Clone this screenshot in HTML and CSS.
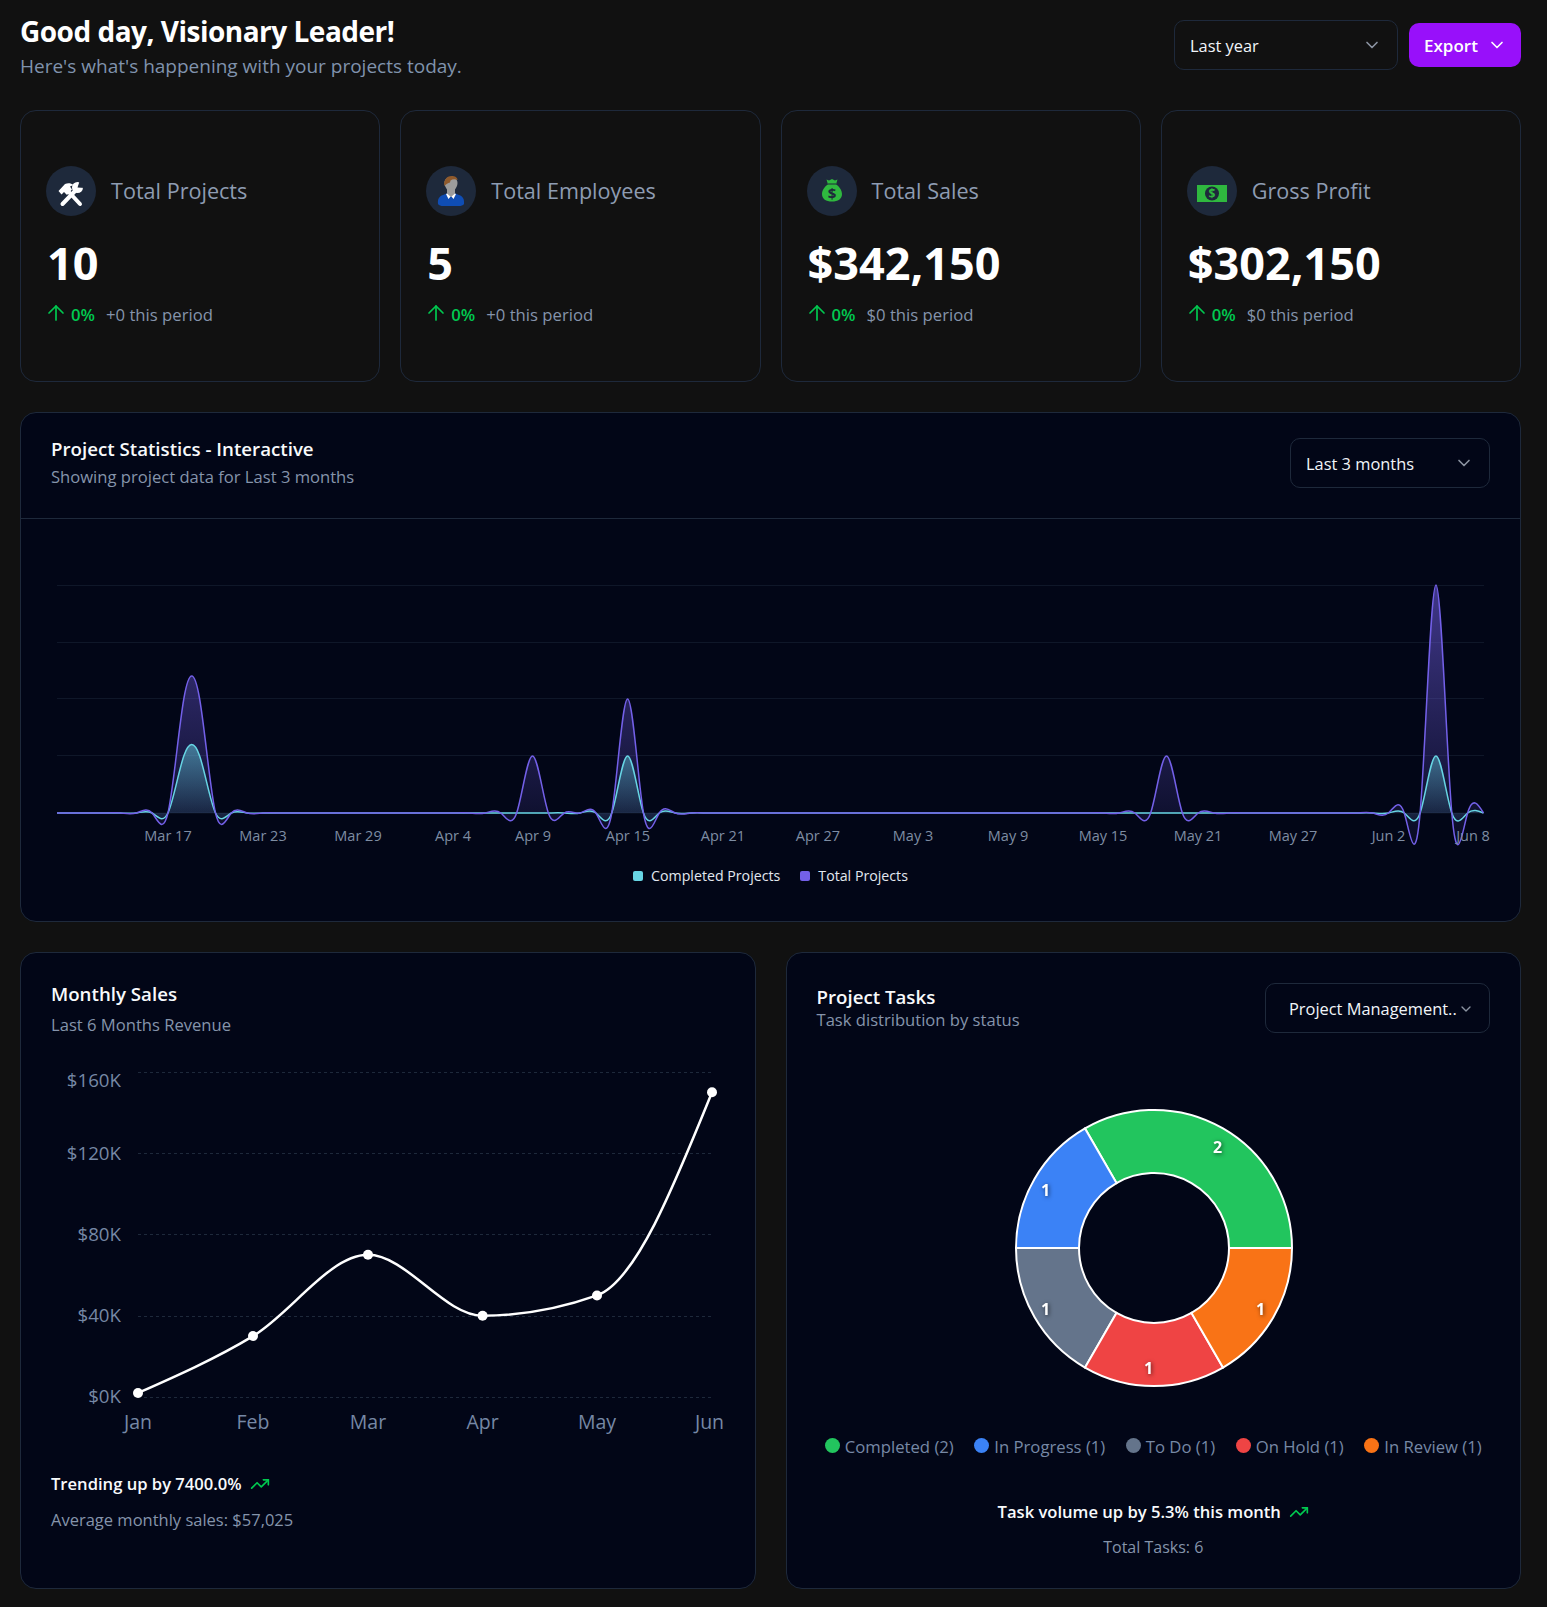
FILE: index.html
```html
<!DOCTYPE html>
<html lang="en">
<head>
    <meta charset="UTF-8">
    <meta name="viewport" content="width=device-width, initial-scale=1.0">
    <title>Dashboard</title>
    <link rel="stylesheet" href="styles.css">
</head>
<body>
    <header class="page-header">
        <div>
            <h1>Good day, Visionary Leader!</h1>
            <p class="page-sub">Here's what's happening with your projects today.</p>
        </div>
        <div class="header-actions">
            <div class="select select-year">
                <span>Last year</span>
                <svg class="chevron" viewBox="0 0 24 24"><path d="m6 9 6 6 6-6"/></svg>
            </div>
            <button class="export-btn">
                Export
                <svg class="chevron" viewBox="0 0 24 24"><path d="m6 9 6 6 6-6"/></svg>
            </button>
        </div>
    </header>

    <!-- stat cards -->
    <section class="stats">
        <div class="stat-card">
            <div class="stat-head">
                <span class="stat-icon">
                    <svg class="tools-icon" viewBox="0 0 28 26" width="28" height="26">
                        <path class="tool-shaft" d="M10 9 23 23"/>
                        <path fill="#fff" d="M1.500 10 8 3c3-1.500 6-1 8.500 1L13 5.500l2 3-5 5.500-3-3-2.500 2.500z"/>
                        <path class="tool-shaft" d="M19 9 5.500 23"/>
                        <circle fill="#fff" cx="20.500" cy="6.500" r="5.500"/>
                        <path fill="#1e293b" d="M20.500 6.500 23 -1 29 1 28 7z"/>
                    </svg>
                </span>
                <span class="stat-label">Total Projects</span>
            </div>
            <div class="stat-value">10</div>
            <div class="stat-trend">
                <svg class="arrow-up" viewBox="0 0 24 24"><path d="m5 12 7-7 7 7"/><path d="M12 19V5"/></svg>
                <span class="trend-pct">0%</span>
                <span class="trend-note">+0 this period</span>
            </div>
        </div>

        <div class="stat-card">
            <div class="stat-head">
                <span class="stat-icon">
                    <svg viewBox="0 0 50 50" width="50" height="50">
                        <path fill="#0f4db4" d="M12 38c-.5-5 1-7.500 5-9l5-2h6l5 2c4 1.500 5.500 4 5 9-1 1.500-3 2-5 2H17c-2 0-4-.5-5-2z"/>
                        <path fill="#fff" d="M20 28l3-1.500 2 3 2-3 3 1.500-2.500 5-2.500-3-2.500 3z"/>
                        <path fill="#9c9c9c" d="M18.500 17c0-4 3-6 6.500-6s6.500 2 6.500 6c0 3-1.500 5-2.500 6.500v4l-4 3.500-4-3.500v-4c-1-1.500-2.500-3.500-2.500-6.500z"/>
                        <path fill="#8f5a2c" d="M18.500 20c-1.500-5 2-10 7-10 3.500 0 6 1.500 6 4-2.500-1-5-1-7 .5l-.5 2c-2 .5-4 1.500-5.500 3.500z"/>
                    </svg>
                </span>
                <span class="stat-label">Total Employees</span>
            </div>
            <div class="stat-value">5</div>
            <div class="stat-trend">
                <svg class="arrow-up" viewBox="0 0 24 24"><path d="m5 12 7-7 7 7"/><path d="M12 19V5"/></svg>
                <span class="trend-pct">0%</span>
                <span class="trend-note">+0 this period</span>
            </div>
        </div>

        <div class="stat-card">
            <div class="stat-head">
                <span class="stat-icon">
                    <svg viewBox="0 0 50 50" width="50" height="50">
                        <path fill="#2fb83f" d="M19.500 13.500 22 14.500 25 13l3 1.500 2.500-1-1.500 5c3.500 2 6 6 6 9.500 0 5-4 7.500-10 7.500s-10-2.500-10-7.500c0-3.500 2.500-7.500 6-9.500z"/>
                        <path stroke="#1e293b" stroke-width="1" d="M21 18h8"/>
                        <text class="bag-dollar" x="25" y="32.500">$</text>
                    </svg>
                </span>
                <span class="stat-label">Total Sales</span>
            </div>
            <div class="stat-value">$342,150</div>
            <div class="stat-trend">
                <svg class="arrow-up" viewBox="0 0 24 24"><path d="m5 12 7-7 7 7"/><path d="M12 19V5"/></svg>
                <span class="trend-pct">0%</span>
                <span class="trend-note">$0 this period</span>
            </div>
        </div>

        <div class="stat-card">
            <div class="stat-head">
                <span class="stat-icon">
                    <svg viewBox="0 0 50 50" width="50" height="50">
                        <rect fill="#2fb83f" x="10" y="19" width="30" height="17"/>
                        <circle fill="#1e293b" cx="25" cy="27.500" r="7"/>
                        <text class="note-dollar" x="25" y="32">$</text>
                    </svg>
                </span>
                <span class="stat-label">Gross Profit</span>
            </div>
            <div class="stat-value">$302,150</div>
            <div class="stat-trend">
                <svg class="arrow-up" viewBox="0 0 24 24"><path d="m5 12 7-7 7 7"/><path d="M12 19V5"/></svg>
                <span class="trend-pct">0%</span>
                <span class="trend-note">$0 this period</span>
            </div>
        </div>
    </section>

    <!-- project statistics -->
    <section class="panel stats-panel">
        <div class="panel-head">
            <div>
                <h2>Project Statistics - Interactive</h2>
                <p class="panel-sub">Showing project data for Last 3 months</p>
            </div>
            <div class="select select-range">
                <span>Last 3 months</span>
                <svg class="chevron" viewBox="0 0 24 24"><path d="m6 9 6 6 6-6"/></svg>
            </div>
        </div>
        <svg id="projectChart" class="project-chart" viewBox="21 519 1499 340" width="1499" height="340">
            <defs>
                <linearGradient id="fillCompleted" x1="0" y1="0" x2="0" y2="1">
                    <stop offset="0" stop-color="#67d5e4" stop-opacity="0.5"/>
                    <stop offset="1" stop-color="#67d5e4" stop-opacity="0.06"/>
                </linearGradient>
                <linearGradient id="fillTotal" x1="0" y1="0" x2="0" y2="1">
                    <stop offset="0" stop-color="#7360e8" stop-opacity="0.55"/>
                    <stop offset="1" stop-color="#7360e8" stop-opacity="0.06"/>
                </linearGradient>
            </defs>
            <g class="grid-lines">
                <path d="M57 585.500H1484"/>
                <path d="M57 642.500H1484"/>
                <path d="M57 698.500H1484"/>
                <path d="M57 755.500H1484"/>
                <path d="M57 813H1484"/>
            </g>
            <g id="projectAreas"></g>
            <g class="axis-x">
                <text x="168" y="841">Mar 17</text>
                <text x="263" y="841">Mar 23</text>
                <text x="358" y="841">Mar 29</text>
                <text x="453" y="841">Apr 4</text>
                <text x="533" y="841">Apr 9</text>
                <text x="628" y="841">Apr 15</text>
                <text x="723" y="841">Apr 21</text>
                <text x="818" y="841">Apr 27</text>
                <text x="913" y="841">May 3</text>
                <text x="1008" y="841">May 9</text>
                <text x="1103" y="841">May 15</text>
                <text x="1198" y="841">May 21</text>
                <text x="1293" y="841">May 27</text>
                <text x="1388.500" y="841">Jun 2</text>
                <text x="1473" y="841">Jun 8</text>
            </g>
        </svg>
        <div class="chart-legend">
            <span class="legend-item"><i class="swatch swatch-teal"></i>Completed Projects</span>
            <span class="legend-item"><i class="swatch swatch-purple"></i>Total Projects</span>
        </div>
    </section>

    <section class="bottom-row">
        <!-- monthly sales -->
        <div class="panel sales-panel">
            <h2>Monthly Sales</h2>
            <p class="panel-sub sales-sub">Last 6 Months Revenue</p>
            <svg class="sales-chart" viewBox="21 1050 733 390" width="733" height="390">
                <g class="grid-dashed">
                    <path d="M138 1072.500H712"/>
                    <path d="M138 1153.500H712"/>
                    <path d="M138 1234.500H712"/>
                    <path d="M138 1316.500H712"/>
                    <path d="M138 1397.500H712"/>
                </g>
                <g class="axis-y">
                    <text x="121" y="1087">$160K</text>
                    <text x="121" y="1160">$120K</text>
                    <text x="121" y="1241">$80K</text>
                    <text x="121" y="1322">$40K</text>
                    <text x="121" y="1403">$0K</text>
                </g>
                <g class="axis-months">
                    <text x="138" y="1429">Jan</text>
                    <text x="253" y="1429">Feb</text>
                    <text x="368" y="1429">Mar</text>
                    <text x="482.600" y="1429">Apr</text>
                    <text x="597" y="1429">May</text>
                    <text x="709.500" y="1429">Jun</text>
                </g>
                <g id="salesLine"></g>
            </svg>
            <div class="panel-foot">
                <p class="foot-main">
                    Trending up by 7400.0%
                    <svg class="trend-icon" viewBox="0 0 24 24"><path d="M22 7 13.500 15.500 8.500 10.500 2 17"/><path d="M16 7h6v6"/></svg>
                </p>
                <p class="foot-sub">Average monthly sales: $57,025</p>
            </div>
        </div>

        <!-- project tasks -->
        <div class="panel tasks-panel">
            <div class="tasks-head">
                <div class="tasks-title">
                    <h2>Project Tasks</h2>
                    <p class="panel-sub">Task distribution by status</p>
                </div>
                <div class="select select-project">
                    <span>Project Management..</span>
                    <svg class="chevron" viewBox="0 0 24 24"><path d="m6 9 6 6 6-6"/></svg>
                </div>
            </div>
            <svg class="donut" viewBox="-151 -150 300 300" width="300" height="300">
                <g class="donut-slices">
                    <path fill="#22c55e" d="M138 0A138 138 0 0 0-69-119.510L-37.500-64.950A75 75 0 0 1 75 0Z"/>
                    <path fill="#3b82f6" d="M-69-119.510A138 138 0 0 0-138 0L-75 0A75 75 0 0 1-37.500-64.950Z"/>
                    <path fill="#64748b" d="M-138 0A138 138 0 0 0-69 119.510L-37.500 64.950A75 75 0 0 1-75 0Z"/>
                    <path fill="#ef4444" d="M-69 119.510A138 138 0 0 0 69 119.510L37.500 64.950A75 75 0 0 1-37.500 64.950Z"/>
                    <path fill="#f97316" d="M69 119.510A138 138 0 0 0 138 0L75 0A75 75 0 0 1 37.500 64.950Z"/>
                </g>
                <g class="donut-labels">
                    <text x="63.500" y="-95">2</text>
                    <text x="-108.500" y="-52">1</text>
                    <text x="-108.500" y="67">1</text>
                    <text x="-5.500" y="126">1</text>
                    <text x="106.500" y="67">1</text>
                </g>
            </svg>
            <div class="donut-legend">
                <span class="legend-item"><i class="dot dot-green"></i>Completed (2)</span>
                <span class="legend-item"><i class="dot dot-blue"></i>In Progress (1)</span>
                <span class="legend-item"><i class="dot dot-slate"></i>To Do (1)</span>
                <span class="legend-item"><i class="dot dot-red"></i>On Hold (1)</span>
                <span class="legend-item"><i class="dot dot-orange"></i>In Review (1)</span>
            </div>
            <div class="panel-foot tasks-foot">
                <p class="foot-main">
                    Task volume up by 5.3% this month
                    <svg class="trend-icon" viewBox="0 0 24 24"><path d="M22 7 13.500 15.500 8.500 10.500 2 17"/><path d="M16 7h6v6"/></svg>
                </p>
                <p class="foot-sub">Total Tasks: 6</p>
            </div>
        </div>
    </section>

    <script src="chart.js"></script>
</body>
</html>
```

FILE: styles.css
```css
* {
    box-sizing: border-box;
}
body {
    margin: 0;
    padding: 20px 26px 17px 20px;
    background-color: #111111;
    color: #fff;
    font-family: "Open Sans", "Liberation Sans", sans-serif;
}
h1, h2, p {
    margin: 0;
}
.page-header {
    display: flex;
    justify-content: space-between;
    height: 50px;
    margin-bottom: 40px;
}
h1 {
    font-size: 28px;
    font-weight: 700;
    line-height: 22px;
    letter-spacing: -0.5px;
}
.page-sub {
    margin-top: 11px;
    font-size: 19px;
    line-height: 26px;
    color: #8093ad;
}
.header-actions {
    display: flex;
    align-items: center;
    gap: 11px;
}
.select {
    display: flex;
    align-items: center;
    justify-content: space-between;
    height: 50px;
    border: 1px solid #1e293b;
    border-radius: 10px;
    padding: 0 15px;
    font-size: 16.400px;
    white-space: nowrap;
    color: #f1f5f9;
}
.chevron {
    width: 20px;
    height: 20px;
    fill: none;
    stroke: #8b93a1;
    stroke-width: 2;
    stroke-linecap: round;
    stroke-linejoin: round;
}
.select-year {
    width: 224px;
}
.export-btn {
    display: flex;
    align-items: center;
    gap: 9px;
    width: 112px;
    height: 44px;
    padding: 0 14px 0 15px;
    border: none;
    border-radius: 10px;
    background-color: #9810fa;
    color: #fff;
    font-family: inherit;
    font-size: 17px;
    font-weight: 600;
}
.export-btn .chevron {
    stroke: #fff;
}

.stats {
    display: grid;
    grid-template-columns: repeat(4, 1fr);
    gap: 20px;
    margin-bottom: 30px;
}
.stat-card {
    height: 272px;
    padding: 55px 25px 0;
    border: 1px solid #1e293b;
    border-radius: 16px;
}
.stat-head {
    display: flex;
    align-items: center;
    gap: 15px;
}
.stat-icon {
    display: flex;
    align-items: center;
    justify-content: center;
    width: 50px;
    height: 50px;
    border-radius: 50%;
    background-color: #1e293b;
}
.tools-icon {
    margin-top: 5px;
}
.tool-shaft {
    stroke: #fff;
    stroke-width: 4;
    stroke-linecap: round;
}
.bag-dollar, .note-dollar {
    fill: #1e293b;
    font-family: "Open Sans", sans-serif;
    font-size: 15px;
    font-weight: 700;
    text-anchor: middle;
}
.note-dollar {
    fill: #2fb83f;
    font-size: 12px;
}
.stat-label {
    margin-bottom: 2px;
    font-size: 21.600px;
    font-weight: 500;
    color: #8e9cb2;
}
.stat-value {
    margin-top: 16px;
    padding-left: 1px;
    font-size: 45px;
    font-weight: 700;
    line-height: 62px;
}
.stat-trend {
    display: flex;
    align-items: center;
    margin-top: 7px;
    font-size: 16.700px;
    line-height: 26px;
}
.arrow-up {
    width: 24px;
    height: 24px;
    margin-left: -2px;
    margin-right: 3px;
    margin-bottom: 4px;
    fill: none;
    stroke: #00c950;
    stroke-width: 1.700;
    stroke-linecap: round;
    stroke-linejoin: round;
}
.trend-pct {
    margin-right: 11px;
    font-weight: 600;
    color: #00c950;
}
.trend-note {
    color: #8594ab;
}

.panel {
    border: 1px solid #1e293b;
    border-radius: 16px;
    background-color: #020617;
}
h2 {
    font-size: 18.700px;
    font-weight: 600;
    line-height: 26px;
    color: #f8fafc;
}
.panel-sub {
    font-size: 16.600px;
    line-height: 26px;
    color: #8594ab;
}
.stats-panel {
    height: 510px;
    margin-bottom: 30px;
}
.panel-head {
    display: flex;
    align-items: flex-start;
    justify-content: space-between;
    height: 106px;
    padding: 25px 30px 0;
    border-bottom: 1px solid #1e293b;
}
.panel-head > div:first-child {
    margin-top: -2px;
}
.panel-head .panel-sub {
    margin-top: 2px;
}
.select-range {
    width: 200px;
}
.project-chart, .sales-chart, .donut {
    display: block;
}
.grid-lines path {
    stroke: #0f1729;
    stroke-width: 1;
}
.axis-x text {
    fill: #7e8da3;
    font-size: 14.500px;
    text-anchor: middle;
}
.chart-legend {
    display: flex;
    justify-content: center;
    gap: 20px;
    margin-top: 7px;
    font-size: 14.200px;
    line-height: 20px;
    color: #e2e8f0;
}
.legend-item {
    display: flex;
    align-items: center;
}
.swatch {
    width: 10px;
    height: 10px;
    margin-right: 8px;
    border-radius: 2px;
}
.swatch-teal {
    background-color: #67d5e4;
}
.swatch-purple {
    background-color: #7360e8;
}

.bottom-row {
    display: grid;
    grid-template-columns: 1fr 1fr;
    gap: 30px;
}
.sales-panel, .tasks-panel {
    height: 637px;
}
.sales-panel h2 {
    margin: 28px 30px 0;
}
.sales-sub {
    margin: 5px 30px 0;
}
.sales-chart {
    margin-top: 12px;
}
.grid-dashed path {
    stroke: #1e293b;
    stroke-width: 1;
    stroke-dasharray: 3 3;
}
.axis-y text {
    fill: #7688a5;
    font-size: 18.700px;
    text-anchor: end;
}
.axis-months text {
    fill: #7688a5;
    font-size: 19.500px;
    text-anchor: middle;
}
.panel-foot {
    padding: 31px 30px 0;
}
.foot-main {
    display: flex;
    align-items: center;
    gap: 8px;
    font-size: 16.600px;
    font-weight: 600;
    line-height: 26px;
    color: #f8fafc;
}
.foot-sub {
    margin-top: 10px;
    font-size: 16.500px;
    line-height: 26px;
    color: #8594ab;
}
.trend-icon {
    width: 20px;
    height: 20px;
    fill: none;
    stroke: #00c950;
    stroke-width: 2;
    stroke-linecap: round;
    stroke-linejoin: round;
}
.tasks-head {
    display: flex;
    align-items: flex-start;
    justify-content: space-between;
    padding: 30px 30px 0;
}
.tasks-title {
    margin-top: 1px;
}
.tasks-head .panel-sub {
    line-height: 20px;
}
.select-project {
    width: 225px;
    padding: 1px 15px 0 23px;
}
.select-project .chevron {
    width: 16px;
    height: 16px;
}
.donut {
    margin: 65px auto 0;
}
.donut-slices path {
    stroke: #fff;
    stroke-width: 2;
}
.donut-labels text {
    fill: #fff;
    font-size: 16px;
    font-weight: 700;
    text-anchor: middle;
    filter: drop-shadow(1px 1px 2px rgba(0, 0, 0, 0.6));
}
.donut-legend {
    display: flex;
    justify-content: center;
    gap: 20.500px;
    margin-top: 37px;
    font-size: 16.700px;
    line-height: 24px;
    color: #7688a5;
}
.dot {
    width: 15px;
    height: 15px;
    margin-right: 5px;
    margin-bottom: 3px;
    border-radius: 50%;
}
.dot-green { background-color: #22c55e; }
.dot-blue { background-color: #3b82f6; }
.dot-slate { background-color: #64748b; }
.dot-red { background-color: #ef4444; }
.dot-orange { background-color: #f97316; }
.tasks-foot {
    padding-top: 40px;
    text-align: center;
}
.tasks-foot .foot-main {
    justify-content: center;
}
.tasks-foot .foot-sub {
    margin-top: 9px;
    font-size: 16px;
}
```

FILE: chart.js
```js
// project statistics: one point per day from Mar 10 to Jun 8
const DAYS = 91;
const LEFT = 57;
const STEP = 15.85;
const BASE = 813;
const UNIT = 57;

const totals = { 8: 2, 9: 2, 30: 1, 36: 2, 70: 1, 87: 4 };
const completed = { 8: 1, 9: 1, 36: 1, 87: 1 };

function controlPoints(x) {
    const n = x.length - 1;
    const a = new Array(n);
    const b = new Array(n);
    const r = new Array(n);
    a[0] = 0;
    b[0] = 2;
    r[0] = x[0] + 2 * x[1];
    for (let i = 1; i < n - 1; i++) {
        a[i] = 1;
        b[i] = 4;
        r[i] = 4 * x[i] + 2 * x[i + 1];
    }
    a[n - 1] = 2;
    b[n - 1] = 7;
    r[n - 1] = 8 * x[n - 1] + x[n];
    for (let i = 1; i < n; i++) {
        const m = a[i] / b[i - 1];
        b[i] -= m;
        r[i] -= m * r[i - 1];
    }
    a[n - 1] = r[n - 1] / b[n - 1];
    for (let i = n - 2; i >= 0; i--) {
        a[i] = (r[i] - a[i + 1]) / b[i];
    }
    b[n - 1] = (x[n] + a[n - 1]) / 2;
    for (let i = 0; i < n - 1; i++) {
        b[i] = 2 * x[i + 1] - a[i + 1];
    }
    return [a, b];
}

function naturalPath(xs, ys) {
    const [ax, bx] = controlPoints(xs);
    const [ay, by] = controlPoints(ys);
    let d = `M${xs[0]} ${ys[0]}`;
    for (let i = 0; i < xs.length - 1; i++) {
        d += `C${ax[i]} ${ay[i]} ${bx[i]} ${by[i]} ${xs[i + 1]} ${ys[i + 1]}`;
    }
    return d;
}

function monotonePath(xs, ys) {
    const n = xs.length;
    const slopes = [];
    for (let i = 1; i < n - 1; i++) {
        const h0 = xs[i] - xs[i - 1];
        const h1 = xs[i + 1] - xs[i];
        const s0 = (ys[i] - ys[i - 1]) / h0;
        const s1 = (ys[i + 1] - ys[i]) / h1;
        const p = (s0 * h1 + s1 * h0) / (h0 + h1);
        slopes[i] = (Math.sign(s0) + Math.sign(s1)) * Math.min(Math.abs(s0), Math.abs(s1), 0.5 * Math.abs(p)) || 0;
    }
    const h = xs[1] - xs[0];
    slopes[0] = (3 * (ys[1] - ys[0]) / h - slopes[1]) / 2;
    slopes[n - 1] = (3 * (ys[n - 1] - ys[n - 2]) / h - slopes[n - 2]) / 2;
    let d = `M${xs[0]} ${ys[0]}`;
    for (let i = 0; i < n - 1; i++) {
        const dx = (xs[i + 1] - xs[i]) / 3;
        d += `C${xs[i] + dx} ${ys[i] + dx * slopes[i]} ${xs[i + 1] - dx} ${ys[i + 1] - dx * slopes[i + 1]} ${xs[i + 1]} ${ys[i + 1]}`;
    }
    return d;
}

function addSvg(parent, tag, attrs) {
    const el = document.createElementNS('http://www.w3.org/2000/svg', tag);
    Object.keys(attrs).forEach((k) => el.setAttribute(k, attrs[k]));
    parent.appendChild(el);
}

function seriesLine(series) {
    const xs = [];
    const ys = [];
    for (let i = 0; i < DAYS; i++) {
        xs.push(LEFT + i * STEP);
        ys.push(BASE - (series[i] || 0) * UNIT);
    }
    return { line: naturalPath(xs, ys), close: `L${xs[DAYS - 1]} ${BASE}L${xs[0]} ${BASE}Z` };
}

const group = document.getElementById('projectAreas');
const totalLine = seriesLine(totals);
const completedLine = seriesLine(completed);
addSvg(group, 'path', { d: totalLine.line + totalLine.close, fill: 'url(#fillTotal)' });
addSvg(group, 'path', { d: completedLine.line + completedLine.close, fill: 'url(#fillCompleted)' });
addSvg(group, 'path', { d: completedLine.line, fill: 'none', stroke: '#67d5e4', 'stroke-width': 1.5 });
addSvg(group, 'path', { d: totalLine.line, fill: 'none', stroke: '#7360e8', 'stroke-width': 1.5 });

// monthly sales
const salesX = [138, 253, 368, 482.6, 597, 712];
const salesY = [2000, 30000, 70000, 40000, 50000, 150000].map((v) => 1397 - v * 325 / 160000);
const salesGroup = document.getElementById('salesLine');
addSvg(salesGroup, 'path', { d: monotonePath(salesX, salesY), fill: 'none', stroke: '#fff', 'stroke-width': 2.5 });
salesX.forEach((x, i) => addSvg(salesGroup, 'circle', { cx: x, cy: salesY[i], r: 5, fill: '#fff' }));
```
